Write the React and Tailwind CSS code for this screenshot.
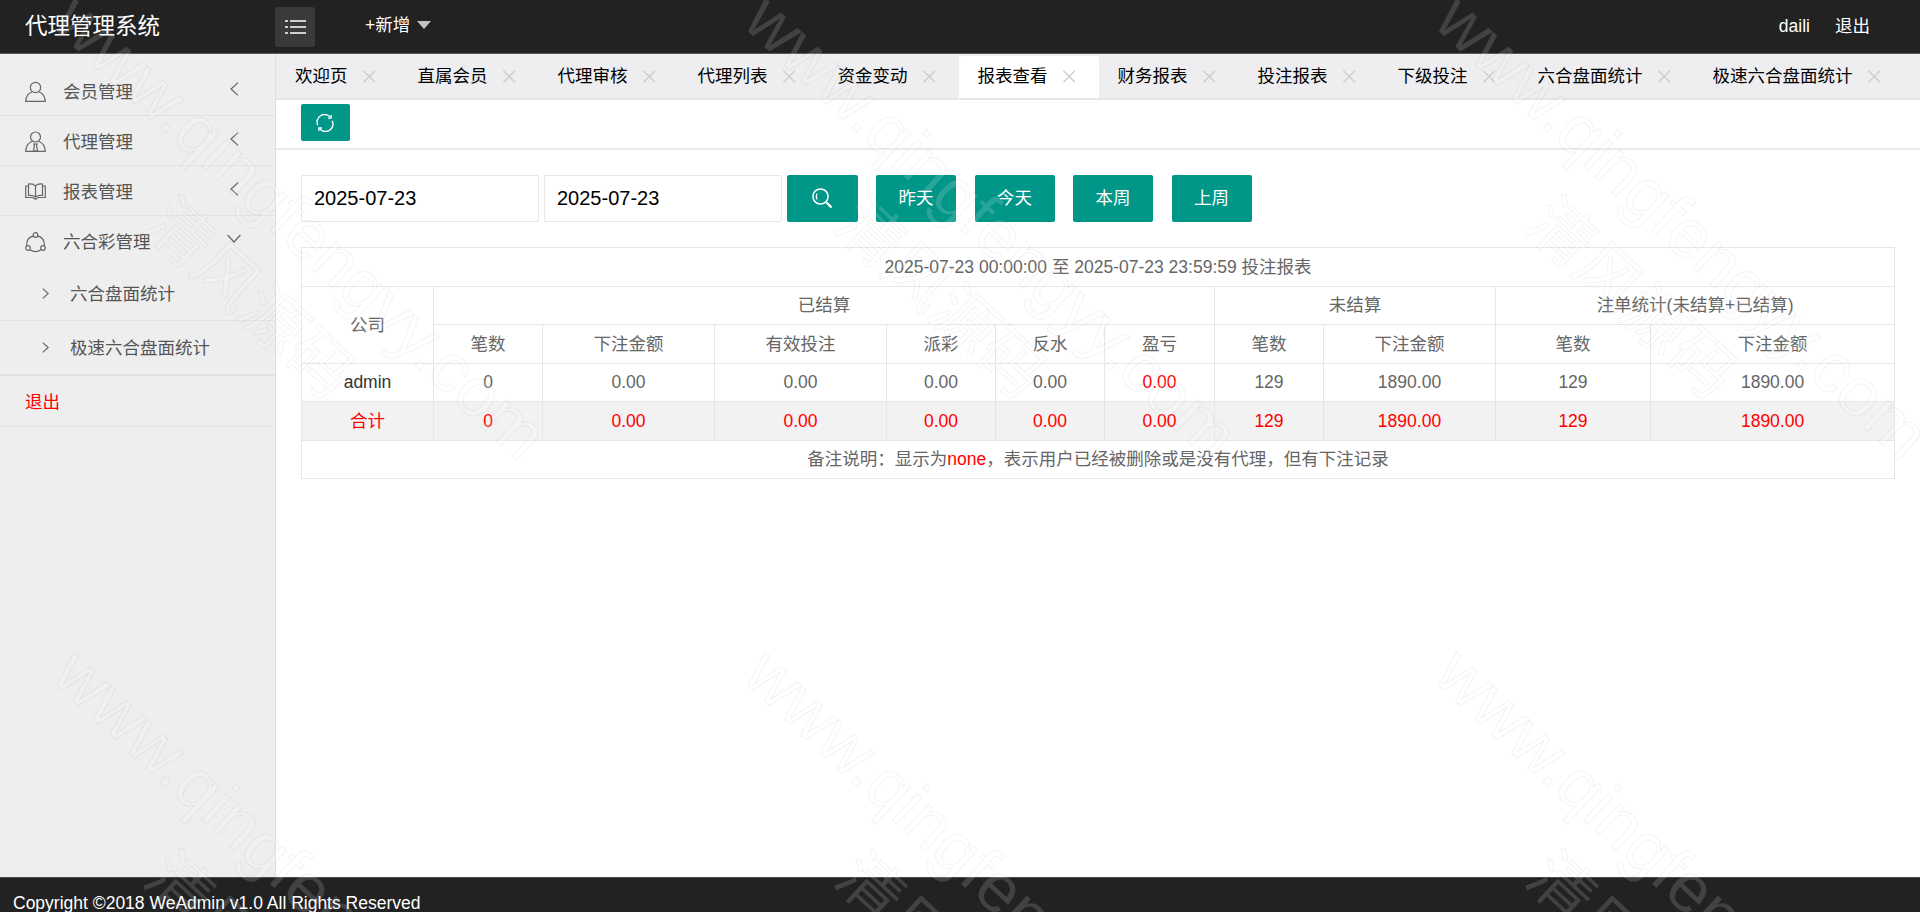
const tabs = [
  "欢迎页",
  "直属会员",
  "代理审核",
  "代理列表",
  "资金变动",
  "报表查看",
  "财务报表",
  "投注报表",
  "下级投注",
  "六合盘面统计",
  "极速六合盘面统计",
];

const columns = [132, 109, 172, 172, 109, 109, 110, 109, 172, 155, 244];

const subHeads = ["笔数", "下注金额", "有效投注", "派彩", "反水", "盈亏", "笔数", "下注金额", "笔数", "下注金额"];

const adminRow = ["0", "0.00", "0.00", "0.00", "0.00", "0.00", "129", "1890.00", "129", "1890.00"];

function UserIcon() {
  return (
    <svg width="21" height="21" viewBox="0 0 21 21" fill="none" stroke="#666" strokeWidth="1.2">
      <circle cx="10.5" cy="6.5" r="5.2" />
      <path d="M6.8 11C3 12.4 1 15.6.7 20.3h19.6c-.3-4.7-2.3-7.9-6.1-9.3" />
    </svg>
  );
}

function AgentIcon() {
  return (
    <svg width="21" height="21" viewBox="0 0 21 21" fill="none" stroke="#666" strokeWidth="1.2">
      <circle cx="10.5" cy="6" r="5" />
      <path d="M7 10.5C3 12 1 15.4.7 20.3h19.6C20 15.4 18 12 14 10.5" />
      <path d="M8.8 13h3.4l-.6 1.6.9 5.4H8.5l.9-5.4z" />
    </svg>
  );
}

function BookIcon() {
  return (
    <svg width="21" height="17" viewBox="0 0 21 17" fill="none" stroke="#666" strokeWidth="1.2">
      <path d="M10.5 3C9 1 6.5.7 3.5 1v11.5c3-.3 5.500 0 7 1.500 1.500-1.500 4-1.800 7-1.500V1c-3-.3-5.500 0-7 2z" />
      <path d="M10.500 3v11M3.500 3H.7v11.500h7l2.800 1.800 2.800-1.800h7V3h-2.800" />
    </svg>
  );
}

function NodesIcon() {
  return (
    <svg width="21" height="21" viewBox="0 0 21 21" fill="none" stroke="#666" strokeWidth="1.2">
      <circle cx="10.500" cy="3" r="2.300" />
      <circle cx="3" cy="16" r="2.300" />
      <circle cx="18" cy="16" r="2.300" />
      <path d="M8.300 3.800C4 5 1.300 8.800 1.600 14M12.700 3.800C17 5 19.700 8.800 19.400 14M5 17.800c3.400 2.300 7.600 2.300 11 0" />
    </svg>
  );
}

function ChevronLeft() {
  return (
    <svg width="9" height="14" viewBox="0 0 9 14" fill="none" stroke="#666" strokeWidth="1.200">
      <path d="M8 .6 1 7l7 6.400" />
    </svg>
  );
}

function ChevronDown() {
  return (
    <svg width="14" height="9" viewBox="0 0 14 9" fill="none" stroke="#666" strokeWidth="1.200">
      <path d="M.6 1 7 8l6.400-7" />
    </svg>
  );
}

function ChevronRight() {
  return (
    <svg width="7" height="11" viewBox="0 0 7 11" fill="none" stroke="#666" strokeWidth="1.200">
      <path d="m.8.6 5.400 4.900-5.400 4.900" />
    </svg>
  );
}

function CloseIcon() {
  return (
    <svg width="12.5" height="13" viewBox="0 0 13 13" fill="none" stroke="#ccc" strokeWidth="1.300">
      <path d="m.5.500 12 12M12.500.500l-12 12" />
    </svg>
  );
}

function MenuItem({ icon, label, open }) {
  return (
    <div className={`relative flex h-[50px] items-center pl-[25px] text-[#555] ${open ? "" : "border-b border-[#e2e2e2]"}`}>
      <span className="flex w-[21px] justify-center pt-[2px]">{icon}</span>
      <span className="ml-[17px] pt-[3px]">{label}</span>
      <span className={`absolute ${open ? "left-[227px] top-[18px]" : "left-[230px] top-[16px]"}`}>
        {open ? <ChevronDown /> : <ChevronLeft />}
      </span>
    </div>
  );
}

function SubItem({ label, last }) {
  return (
    <div className={`flex h-[55px] items-center pl-[42px] text-[#555] border-[#e2e2e2] ${last ? "border-b-2" : "border-b"}`}>
      <ChevronRight />
      <span className="ml-[21px] pt-[2px]">{label}</span>
    </div>
  );
}

function Sidebar() {
  return (
    <aside className="w-[276px] shrink-0 border-r border-[#dedede] bg-[#eeeeee] pt-[12px]">
      <MenuItem icon={<UserIcon />} label="会员管理" />
      <MenuItem icon={<AgentIcon />} label="代理管理" />
      <MenuItem icon={<BookIcon />} label="报表管理" />
      <MenuItem icon={<NodesIcon />} label="六合彩管理" open />
      <SubItem label="六合盘面统计" />
      <SubItem label="极速六合盘面统计" last />
      <div className="flex h-[51px] items-center border-b border-[#e2e2e2] pl-[25px] pt-[3px] text-[#ff0000]">退出</div>
    </aside>
  );
}

function TabBar() {
  return (
    <div className="flex h-[46px] shrink-0 overflow-hidden border-b-2 border-[#e6e6e6] bg-[#eeeef1] text-black">
      {tabs.map((tab) => (
        <div
          key={tab}
          className={`mt-[2px] flex shrink-0 items-center pb-[2px] pl-[19px] pr-[23.5px] rounded-t-[2px] ${tab === "报表查看" ? "bg-white" : ""}`}
        >
          <span>{tab}</span>
          <span className="ml-[15px] flex">
            <CloseIcon />
          </span>
        </div>
      ))}
    </div>
  );
}

function FilterBar() {
  return (
    <div className="flex items-center">
      <input
        readOnly
        defaultValue="2025-07-23"
        className="h-[47px] w-[238px] rounded-[2px] border border-[#e6e6e6] bg-white pl-[12px] text-[20px] text-black outline-none"
      />
      <input
        readOnly
        defaultValue="2025-07-23"
        className="ml-[5px] h-[47px] w-[238px] rounded-[2px] border border-[#e6e6e6] bg-white pl-[12px] text-[20px] text-black outline-none"
      />
      <button className="ml-[5px] flex h-[47px] w-[71px] items-center justify-center rounded-[2px] bg-[#009688]">
        <svg width="21" height="21" viewBox="0 0 21 21" fill="none" stroke="#fff">
          <circle cx="8.500" cy="8.500" r="7.600" strokeWidth="1.500" />
          <path d="M5 5.500C4 7.500 4 9.500 5 11.500" strokeWidth="1.200" />
          <path d="m14.500 14.500 5 5" strokeWidth="2.400" />
        </svg>
      </button>
      <div className="ml-[18px] flex gap-[18.5px]">
        {["昨天", "今天", "本周", "上周"].map((label) => (
          <button key={label} className="h-[47px] w-[80px] rounded-[2px] bg-[#009688] text-white">
            {label}
          </button>
        ))}
      </div>
    </div>
  );
}

function ReportTable() {
  const cell = "border border-[#e6e6e6] text-center font-normal";
  return (
    <table className="mt-[25px] w-[1593px] table-fixed border-collapse text-[#666]">
      <colgroup>
        {columns.map((width, i) => (
          <col key={i} style={{ width }} />
        ))}
      </colgroup>
      <thead>
        <tr className="h-[39px]">
          <th colSpan={11} className={cell}>
            2025-07-23 00:00:00 至 2025-07-23 23:59:59 投注报表
          </th>
        </tr>
        <tr className="h-[38px]">
          <th rowSpan={2} className={cell}>
            公司
          </th>
          <th colSpan={6} className={cell}>
            已结算
          </th>
          <th colSpan={2} className={cell}>
            未结算
          </th>
          <th colSpan={2} className={cell}>
            注单统计(未结算+已结算)
          </th>
        </tr>
        <tr className="h-[39px]">
          {subHeads.map((head, i) => (
            <th key={i} className={cell}>
              {head}
            </th>
          ))}
        </tr>
      </thead>
      <tbody>
        <tr className="h-[38px]">
          <td className={`${cell} text-[#333]`}>admin</td>
          {adminRow.map((value, i) => (
            <td key={i} className={`${cell} ${i === 5 ? "text-[#ff0000]" : ""}`}>
              {value}
            </td>
          ))}
        </tr>
        <tr className="h-[39px] bg-[#f2f2f2] text-[#ff0000]">
          <td className={cell}>合计</td>
          {adminRow.map((value, i) => (
            <td key={i} className={cell}>
              {value}
            </td>
          ))}
        </tr>
        <tr className="h-[38px]">
          <td colSpan={11} className={cell}>
            备注说明：显示为<span className="text-[#ff0000]">none</span>，表示用户已经被删除或是没有代理，但有下注记录
          </td>
        </tr>
      </tbody>
    </table>
  );
}

// diagonal site watermark burnt into the original screenshot
function Watermark() {
  const tiles = [];
  for (let row = 0; row < 2; row++) {
    for (let col = 0; col < 3; col++) {
      tiles.push({ left: 58 + col * 691, top: 33 + row * 654 });
    }
  }
  const mark =
    "absolute origin-top-left rotate-[43deg] whitespace-nowrap text-white/15 [-webkit-text-stroke:1px_rgba(0,0,0,0.05)]";
  return (
    <div className="pointer-events-none absolute inset-0 overflow-hidden">
      {tiles.map((tile, i) => (
        <div key={i} className="absolute" style={tile}>
          <span className={`${mark} left-[31px] top-[-51px] text-[69px] leading-none`}>www.qingfengyy.com</span>
          <span className={`${mark} left-[120px] top-[155px] text-[64px] leading-none`}>清风源码</span>
        </div>
      ))}
    </div>
  );
}

export default function App() {
  return (
    <div className="relative flex h-[912px] w-[1920px] flex-col overflow-hidden bg-white font-['Liberation_Sans','Noto_Sans_CJK_SC',sans-serif] text-[17.5px]">
      <header className="flex h-[54px] shrink-0 items-center border-b border-[#5a5a5a] bg-[#222222] pr-[50px] text-white">
        <div className="w-[275px] pl-[25px] text-[22.500px]">代理管理系统</div>
        <button className="flex h-[40px] w-[40px] items-center justify-center rounded-[3px] bg-[#3a3a3a]">
          <svg width="21" height="14" viewBox="0 0 21 14" fill="none" stroke="#fff" strokeWidth="1.400">
            <path d="M0 1h3M5 1h16M0 7h3M5 7h16M0 13h3M5 13h16" />
          </svg>
        </button>
        <div className="mb-[2px] ml-[50px] flex items-center">
          <span>+新增</span>
          <svg className="mb-[2px] ml-[7px]" width="14" height="8" viewBox="0 0 14 8" fill="#c2c2c2">
            <path d="M0 0h14L7 8z" />
          </svg>
        </div>
        <div className="ml-auto flex gap-[25px]">
          <span>daili</span>
          <span>退出</span>
        </div>
      </header>

      <div className="flex min-h-0 flex-1">
        <Sidebar />
        <main className="flex min-w-0 flex-1 flex-col">
          <TabBar />
          <div className="h-[50px] shrink-0 border-b-2 border-[#e9e9e9] pl-[25px] pt-[4px]">
            <button className="flex h-[37px] w-[49px] items-center justify-center rounded-[2px] bg-[#009688] pr-[2px]">
              <svg width="18" height="18" viewBox="0 0 20 20" fill="none" stroke="#fff" strokeWidth="1.500">
                <path d="M2 12.500A8.300 8.300 0 0 1 15.800 3.500" />
                <path d="M18 7.500A8.300 8.300 0 0 1 4.200 16.500" />
                <path d="M16.800 1v3.500h-3.500M3.200 19v-3.500h3.500" />
              </svg>
            </button>
          </div>
          <div className="px-[25px] pt-[25px]">
            <FilterBar />
            <ReportTable />
          </div>
        </main>
      </div>

      <footer className="h-[35px] shrink-0 overflow-hidden border-t border-[#4a4a4a] bg-[#222222] pl-[13px] leading-[50px] text-white">
        Copyright ©2018 WeAdmin v1.0 All Rights Reserved
      </footer>

      <Watermark />
    </div>
  );
}
